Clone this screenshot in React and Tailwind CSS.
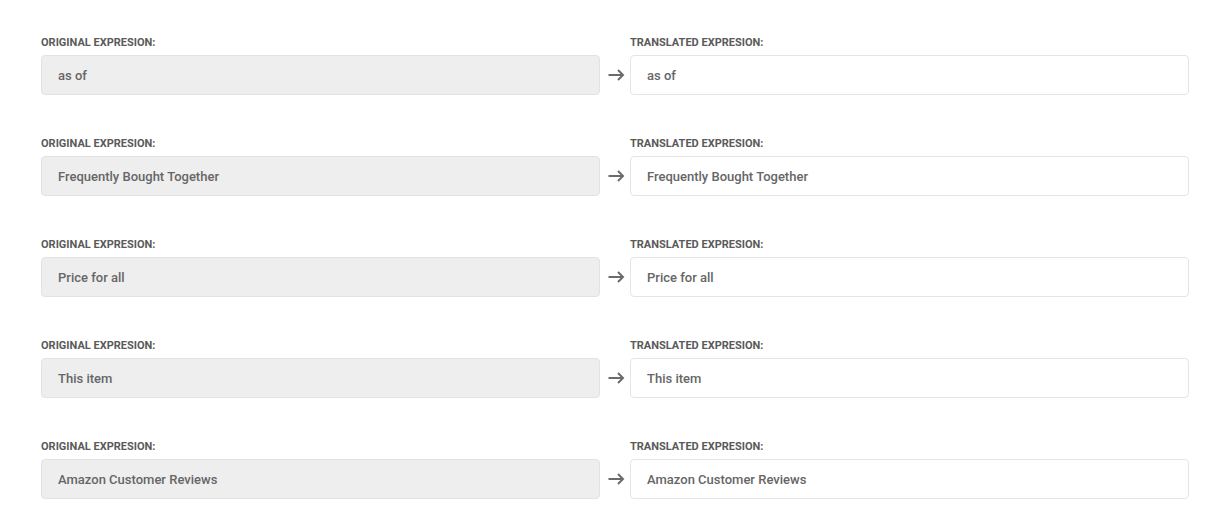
import React from "react"

const rows = [
    "as of",
    "Frequently Bought Together",
    "Price for all",
    "This item",
    "Amazon Customer Reviews",
]

function Arrow() {
    return (
        <svg width="17" height="12" viewBox="0 0 17 12" fill="none" className="stroke-[#6b6b6b]">
            <path d="M0.5 6H15M10 1l5 5-5 5" strokeWidth="2" />
        </svg>
    )
}

export default function App() {
    return (
        <div className="bg-white w-[1215px] h-[522px] pl-[41px] pt-[36px] font-['Roboto',sans-serif]">
            {rows.map((text, i) => (
                <div key={i} className="flex mb-[42px]">
                    <div className="w-[559px]">
                        <div className="text-[11px] leading-[13px] font-bold uppercase text-[#5a5a5a] mb-[6px]">Original expresion:</div>
                        <div className="h-10 rounded-[4px] bg-[#eeeeee] border border-[#e2e2e2] flex items-center px-4 pt-px text-[13px] font-medium text-[#666]">{text}</div>
                    </div>
                    <div className="w-[30px] flex items-end justify-center pb-[14px] pl-[2px]">
                        <Arrow />
                    </div>
                    <div className="w-[559px]">
                        <div className="text-[11px] leading-[13px] font-bold uppercase text-[#5a5a5a] mb-[6px]">Translated expresion:</div>
                        <div className="h-10 rounded-[4px] bg-white border border-[#e5e5e5] flex items-center px-4 pt-px text-[13px] font-medium text-[#666]">{text}</div>
                    </div>
                </div>
            ))}
        </div>
    )
}
